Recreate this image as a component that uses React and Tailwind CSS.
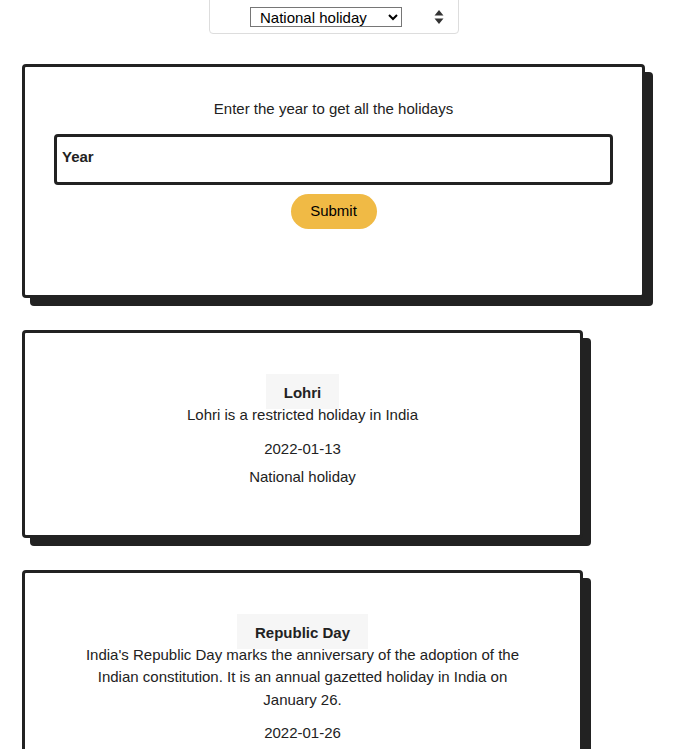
import { useState } from 'react';

const holidays = [
  {
    name: 'Lohri',
    description: 'Lohri is a restricted holiday in India',
    date: '2022-01-13',
    type: 'National holiday'
  },
  {
    name: 'Republic Day',
    description:
      "India's Republic Day marks the anniversary of the adoption of the Indian constitution. It is an annual gazetted holiday in India on January 26.",
    date: '2022-01-26',
    type: 'National holiday'
  },
  {
    name: 'Vasant Panchami',
    description: 'Vasant Panchami is a restricted holiday in India',
    date: '2022-02-05',
    type: 'National holiday'
  }
];

function SortIcon() {
  return (
    <svg width="10" height="16" viewBox="0 0 10 16" className="fill-[#333]">
      <path d="M5 1 L9.5 6.5 H0.5 Z" />
      <path d="M5 15 L9.5 9.5 H0.5 Z" />
    </svg>
  );
}

function HolidayCard({ holiday }) {
  return (
    <div className="w-[561px] rounded-[4px] border-[3px] border-[#222] bg-white shadow-[8px_8px_0_#222] pt-[41px] pb-[47px] flex flex-col items-center text-center">
      <h3 className="bg-[#f6f6f6] px-[18px] pt-[10px] pb-[8px] text-[15px] font-bold leading-[17px] text-[#222]">
        {holiday.name}
      </h3>
      <p className="-mt-[5px] w-[440px] text-[15px] leading-[22.5px] text-[#222]">{holiday.description}</p>
      <p className="mt-[11px] text-[15px] leading-[22px] text-[#222]">{holiday.date}</p>
      <p className="mt-[6px] text-[15px] leading-[22px] text-[#222]">{holiday.type}</p>
    </div>
  );
}

export default function App() {
  const [year, setYear] = useState('');
  const [type, setType] = useState('National holiday');

  return (
    <div className="w-[674px] min-h-screen bg-white pb-10 font-['Liberation_Sans',Arial,sans-serif] text-[#222]">
      {/* Filter */}
      <div className="flex justify-center pr-[6px]">
        <div className="w-[250px] h-[35px] -mt-px rounded-b-[4px] border border-[#ddd] flex items-center justify-between pl-[40px] pr-[14px]">
          <select
            value={type}
            onChange={e => setType(e.target.value)}
            className="w-[152px] h-[20px] border border-[#767676] bg-white text-[15px] leading-[18px] pl-[5px] text-black appearance-auto"
          >
            <option>National holiday</option>
            <option>Religious holiday</option>
            <option>Observance</option>
          </select>
          <SortIcon />
        </div>
      </div>

      <div className="pl-[22px] pt-[30px] flex flex-col gap-[32px]">
        {/* Year form */}
        <div className="w-[623px] h-[234px] rounded-[4px] border-[3px] border-[#222] bg-white shadow-[8px_8px_0_#222] pt-[31px] px-[29px] flex flex-col items-center">
          <p className="text-[15px] leading-[22px]">Enter the year to get all the holidays</p>
          <input
            value={year}
            onChange={e => setYear(e.target.value)}
            placeholder="Year"
            className="mt-[14px] w-full h-[51px] rounded-[4px] border-[3px] border-[#222] px-[5px] pb-[7px] text-[15px] font-bold placeholder:text-[#222] outline-none"
          />
          <button className="mt-[9px] w-[86px] h-[35px] rounded-full bg-[#f0ba45] text-[15px] text-black">
            Submit
          </button>
        </div>

        {holidays.map(h => (
          <HolidayCard key={h.name} holiday={h} />
        ))}
      </div>
    </div>
  );
}
